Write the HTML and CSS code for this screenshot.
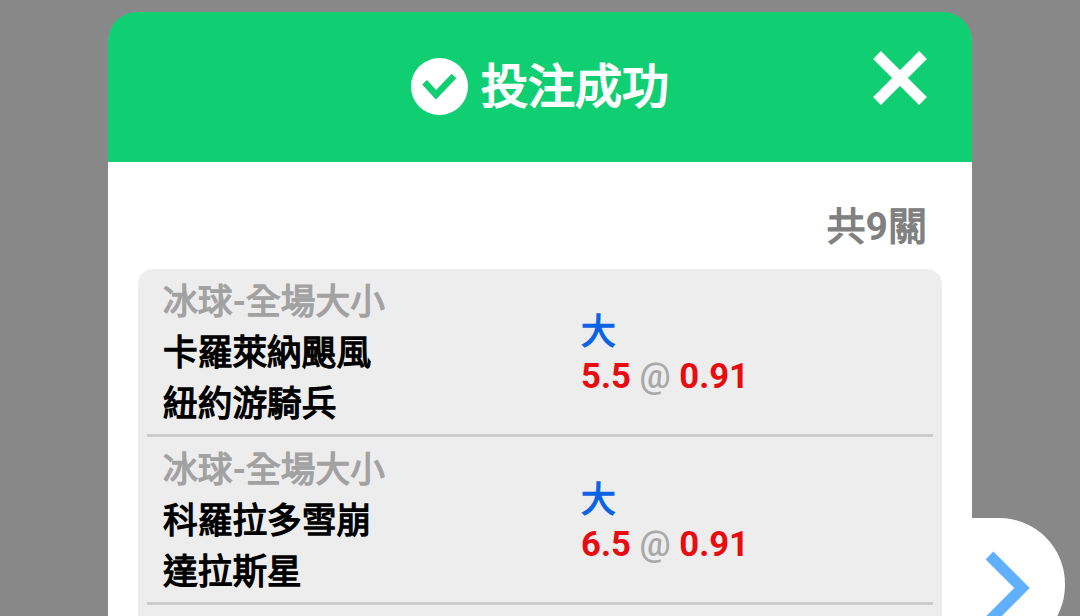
FILE: index.html
```
<!DOCTYPE html>
<html lang="zh-Hant">
  <head>
    <meta charset="UTF-8" />
    <meta name="viewport" content="width=device-width, initial-scale=1.0" />
    <title>投注成功</title>
    <link rel="stylesheet" href="styles.css">
  </head>
  <body>
    <button class="next-btn" aria-label="下一頁">
      <svg width="46" height="74" viewBox="0 0 46 74">
        <path d="M4.5 4.5 L37 37 L4.5 69.5" fill="none" stroke="#60b0ff" stroke-width="11" />
      </svg>
    </button>

    <div class="modal">
      <div class="modal-header">
        <svg class="check-icon" width="57" height="57" viewBox="0 0 57 57">
          <circle cx="28.5" cy="28.5" r="28.5" fill="#fff" />
          <path d="M13.6 24.2 L25 36.8 L43 18" fill="none" stroke="#10cf72" stroke-width="6.5" />
        </svg>
        <h2 class="title">投注成功</h2>
        <button class="close-btn" aria-label="關閉">
          <svg width="54" height="54" viewBox="0 0 54 54">
            <path d="M4 4 L50 50 M50 4 L4 50" fill="none" stroke="#fff" stroke-width="11" />
          </svg>
        </button>
      </div>

      <div class="modal-body">
        <div class="count">共<span class="num">9</span>關</div>
        <div class="bet-list">
          <div class="bet">
            <div class="match">
              <div class="type">冰球<span class="num">-</span>全場大小</div>
              <div>卡羅萊納颶風</div>
              <div>紐約游騎兵</div>
            </div>
            <div class="pick">
              <div class="side">大</div>
              <div class="odds">5.5 <span class="at">@</span> 0.91</div>
            </div>
          </div>
          <div class="bet">
            <div class="match">
              <div class="type">冰球<span class="num">-</span>全場大小</div>
              <div>科羅拉多雪崩</div>
              <div>達拉斯星</div>
            </div>
            <div class="pick">
              <div class="side">大</div>
              <div class="odds">6.5 <span class="at">@</span> 0.91</div>
            </div>
          </div>
        </div>
      </div>
    </div>
  </body>
</html>
```
FILE: styles.css
```
* {
  box-sizing: border-box;
}
html {
  overflow: hidden;
}
body {
  margin: 0;
  height: 616px;
  padding-top: 12px;
  overflow: hidden;
  position: relative;
  background-color: #888;
  font-family: Roboto, "Noto Sans CJK TC", sans-serif;
}
button {
  padding: 0;
  border: none;
  background: none;
  cursor: pointer;
}
svg {
  display: block;
}
.modal {
  position: relative;
  width: 864px;
  height: 604px;
  margin: 0 auto;
  background: white;
  border-radius: 34px 34px 0 0;
}
.modal-header {
  position: relative;
  display: flex;
  align-items: center;
  justify-content: center;
  height: 150px;
  padding-bottom: 1px;
  background-color: #10cf72;
  border-radius: 29px 29px 0 0;
}
.check-icon {
  margin-right: 13px;
}
.title,
.count,
.match,
.side {
  font-weight: normal;
  -webkit-text-stroke: 1.3px currentColor;
}
.title {
  margin: 0;
  color: white;
  font-size: 47px;
  line-height: 60px;
  -webkit-text-stroke-width: 1.8px;
}
.num {
  font-weight: bold;
  -webkit-text-stroke-width: 0;
}
.close-btn {
  position: absolute;
  top: 39px;
  right: 45px;
}
.modal-body {
  padding: 37px 30px 0;
}
.count {
  height: 70px;
  padding-right: 15px;
  text-align: right;
  color: #808080;
  font-size: 39px;
  line-height: 56px;
}
.bet-list {
  height: 347px;
  padding: 0 9px;
  background-color: #ededed;
  border-radius: 15px 15px 0 0;
}
.bet {
  display: flex;
  align-items: center;
  padding: 8px 16px 4px;
  border-bottom: 3px solid #ccc;
  font-size: 34.7px;
  line-height: 51px;
}
.match {
  width: 418px;
  color: #000;
}
.type {
  color: #a2a2a2;
}
.pick {
  line-height: 44px;
}
.side {
  color: #0b63e5;
}
.odds {
  color: #e80c10;
  font-weight: bold;
}
.at {
  color: #a8a8a8;
  font-weight: 500;
}
.next-btn {
  position: absolute;
  top: 518px;
  left: 932px;
  display: flex;
  align-items: flex-start;
  width: 133px;
  height: 133px;
  padding: 33px 0 0 53px;
  background: white;
  border-radius: 0 66px 66px 0;
}
```
